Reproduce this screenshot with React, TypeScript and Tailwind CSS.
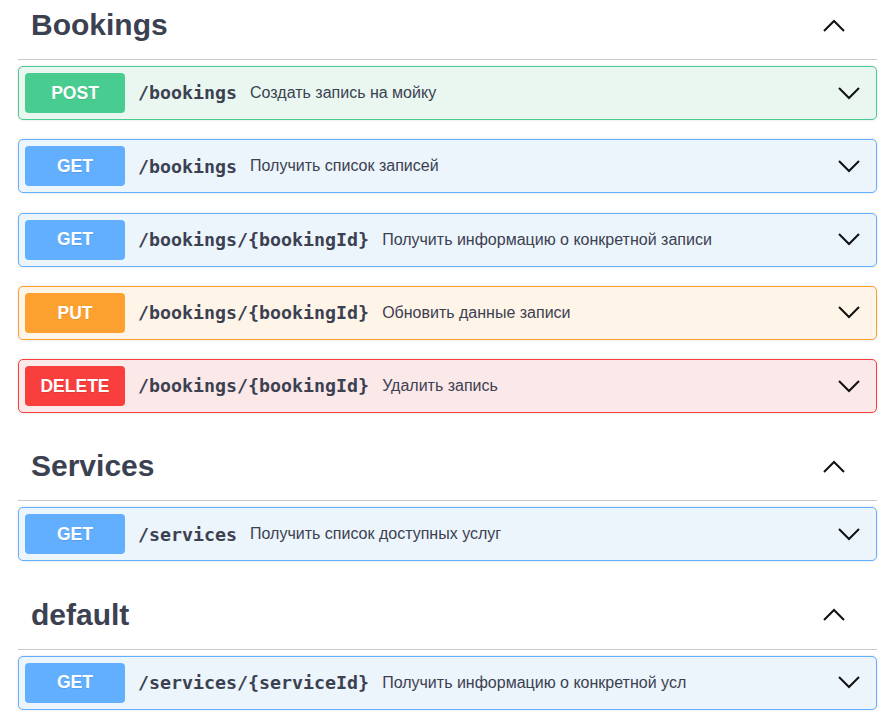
import React from "react";

type Op = { method: "POST" | "GET" | "PUT" | "DELETE"; path: string; desc: string };

const styles: Record<Op["method"], { block: string; badge: string }> = {
  POST: { block: "bg-[#e9f7f0] border-[#49cc90]", badge: "bg-[#49cc90]" },
  GET: { block: "bg-[#ecf4fc] border-[#61affe]", badge: "bg-[#61affe]" },
  PUT: { block: "bg-[#fff4e8] border-[#fca130]", badge: "bg-[#fca130]" },
  DELETE: { block: "bg-[#fbe8e8] border-[#f93e3e]", badge: "bg-[#f93e3e]" },
};

const sections: { title: string; ops: Op[] }[] = [
  {
    title: "Bookings",
    ops: [
      { method: "POST", path: "/bookings", desc: "Создать запись на мойку" },
      { method: "GET", path: "/bookings", desc: "Получить список записей" },
      { method: "GET", path: "/bookings/{bookingId}", desc: "Получить информацию о конкретной записи" },
      { method: "PUT", path: "/bookings/{bookingId}", desc: "Обновить данные записи" },
      { method: "DELETE", path: "/bookings/{bookingId}", desc: "Удалить запись" },
    ],
  },
  {
    title: "Services",
    ops: [{ method: "GET", path: "/services", desc: "Получить список доступных услуг" }],
  },
  {
    title: "default",
    ops: [{ method: "GET", path: "/services/{serviceId}", desc: "Получить информацию о конкретной усл" }],
  },
];

function Chevron({ up }: { up?: boolean }) {
  return (
    <svg width="22" height="13" viewBox="0 0 22 13" className="shrink-0">
      <polyline
        points={up ? "1,12 11,2 21,12" : "1,1 11,11 21,1"}
        fill="none"
        stroke="#111"
        strokeWidth="2"
        strokeLinejoin="miter"
      />
    </svg>
  );
}

export default function App() {
  return (
    <div className="w-[886px] h-[716px] overflow-hidden bg-white pl-[18px] pr-[9px]">
      <div className="-mt-[9px]">
        {sections.map((s) => (
          <div key={s.title}>
            <div className="h-[69px] flex items-center justify-between border-b border-[#c8c9cc] pl-[13px] pr-[32px] mb-[6px]">
              <span
                className="text-[30px] font-bold text-[#3b4151] leading-none"
                style={{ fontFamily: '"Liberation Sans", Arial, sans-serif' }}
              >
                {s.title}
              </span>
              <Chevron up />
            </div>
            {s.ops.map((o, i) => (
              <div
                key={i}
                className={`h-[54px] mb-[19.25px] border rounded-[5px] flex items-center pl-[6px] pr-[16px] shadow-[0_0_3px_rgba(0,0,0,0.12)] ${styles[o.method].block}`}
              >
                <div
                  className={`w-[100px] h-[40px] rounded-[4px] flex items-center justify-center text-white font-bold text-[17.5px] ${styles[o.method].badge}`}
                  style={{ fontFamily: '"Liberation Sans", Arial, sans-serif', textShadow: "0 1px 0 rgba(0,0,0,0.1)" }}
                >
                  {o.method}
                </div>
                <span
                  className="ml-[13px] text-[18.3px] font-bold text-[#3b4151]"
                  style={{ fontFamily: '"DejaVu Sans Mono", monospace' }}
                >
                  {o.path}
                </span>
                <span
                  className="ml-[13px] text-[16px] text-[#3b4151] flex-1"
                  style={{ fontFamily: '"Liberation Sans", Arial, sans-serif' }}
                >
                  {o.desc}
                </span>
                <Chevron />
              </div>
            ))}
          </div>
        ))}
      </div>
    </div>
  );
}
